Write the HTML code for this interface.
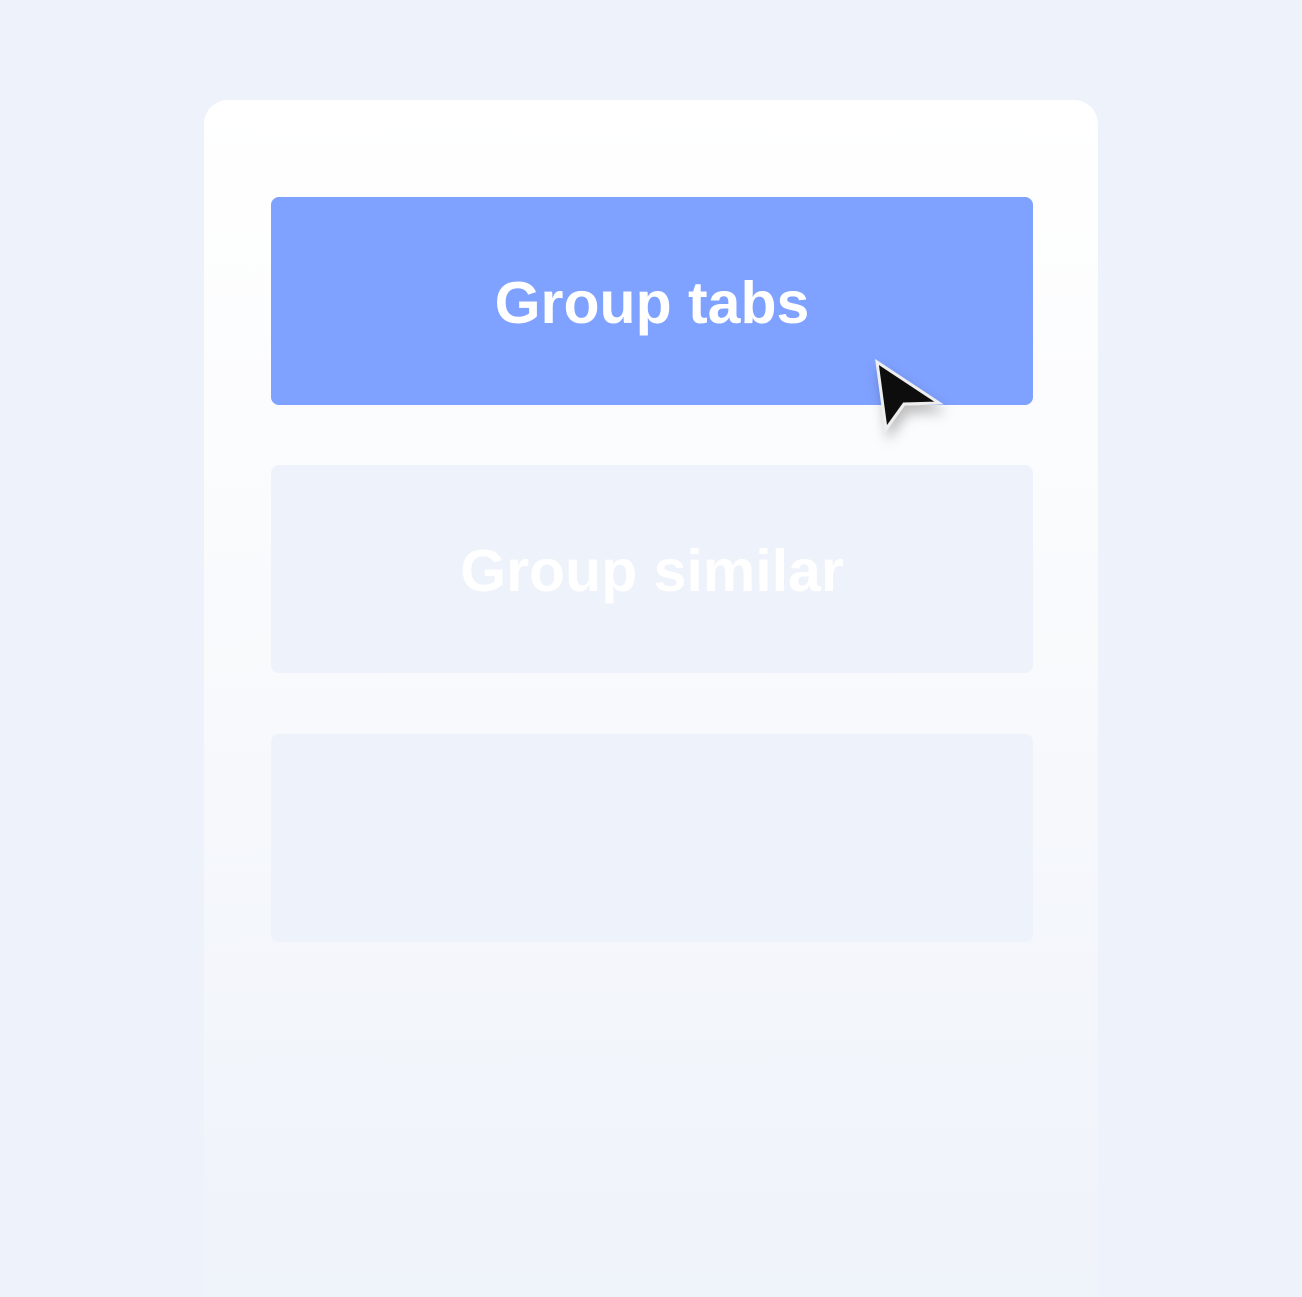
<!DOCTYPE html>
<html><head><style>
html,body{margin:0;padding:0;overflow:hidden;}
body{width:1302px;height:1297px;background:#eef2fa;position:relative;overflow:hidden;font-family:"Liberation Sans",sans-serif;}
.card{position:absolute;left:204px;top:100px;width:894px;height:1197px;border-radius:24px 24px 0 0;background:linear-gradient(#ffffff 0%,#fafbfd 35%,#eff3fa 100%);}
.btn{position:absolute;left:271px;width:762px;height:208px;border-radius:8px;display:flex;align-items:center;justify-content:center;color:#fff;font-size:59px;font-weight:bold;}
.btn span{position:relative;top:2px}
.b1{top:197px;background:#7fa1ff;}
.b2{top:465px;background:#eef2fa;}
.b3{top:734px;background:#eef2fa;}
</style></head><body>
<div class="card"></div>
<div class="btn b1"><span>Group tabs</span></div>
<div class="btn b2"><span>Group similar</span></div>
<div class="btn b3"></div>
<svg style="position:absolute;left:860px;top:350px" width="100" height="100" viewBox="860 350 100 100">
<defs><filter id="s" x="-50%" y="-50%" width="200%" height="200%"><feDropShadow dx="3" dy="8" stdDeviation="6" flood-color="#000" flood-opacity="0.25"/></filter></defs>
<path d="M877 362 L939 403 L904 404 L886 429 Z" fill="#111" stroke="#eee" stroke-width="3" stroke-linejoin="miter" filter="url(#s)"/>
</svg>
</body></html>
